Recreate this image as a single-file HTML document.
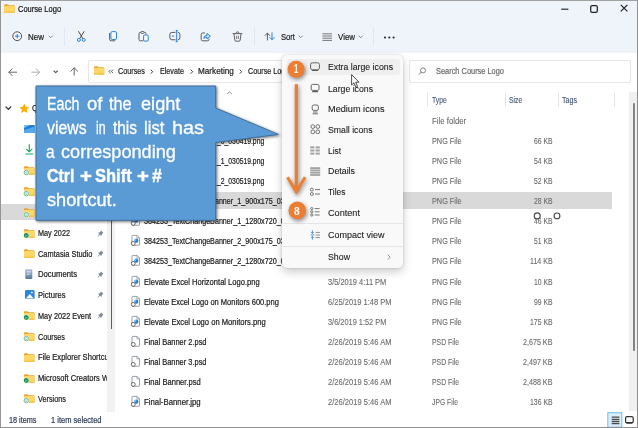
<!DOCTYPE html>
<html lang="en"><head><meta charset="utf-8"><title>Course Logo</title>
<style>
*{box-sizing:border-box;margin:0;padding:0}
html,body{width:638px;height:428px;overflow:hidden;background:#fff}
body{font-family:"Liberation Sans",sans-serif;position:relative;color:#1a1a1a}
.a{position:absolute}
.t{position:absolute;white-space:nowrap;line-height:1;transform-origin:0 50%;display:block}
#win{position:absolute;left:0;top:0;width:638px;height:428px;overflow:hidden}
svg{position:absolute;overflow:visible}
</style></head><body><div id="win">
<!-- base -->
<div class="a" style="left:0px;top:0px;width:638px;height:53.2px;background:#eff4fb"></div>
<svg style="left:4.1px;top:3.8px" width="10.9" height="8.8" viewBox="0 0 21 17.6"><path d="M0 2.2 Q0 0.6 1.6 0.6 H7 L9 2.6 H19.4 Q21 2.6 21 4.2 V16 Q21 17.6 19.4 17.6 H1.6 Q0 17.6 0 16 Z" fill="#e9a52d"/><path d="M0 5.4 Q0 4.2 1.4 4.2 H19.6 Q21 4.2 21 5.6 V16 Q21 17.6 19.4 17.6 H1.6 Q0 17.6 0 16 Z" fill="#ffd767"/><path d="M0 14.8 H21 V16 Q21 17.6 19.4 17.6 H1.6 Q0 17.6 0 16 Z" fill="#f4c144"/></svg>
<svg style="left:560px;top:3.5px" width="10" height="10" viewBox="0 0 10 10"><path d="M1.2 5.2 H8.4" stroke="#222" stroke-width="1.15"/></svg>
<svg style="left:588.5px;top:3.5px" width="10" height="10" viewBox="0 0 10 10"><rect x="1.7" y="1.7" width="6.6" height="6.6" rx="1.4" fill="none" stroke="#222" stroke-width="1.25"/></svg>
<svg style="left:618.6px;top:3.4px" width="10" height="10" viewBox="0 0 10 10"><path d="M1.8 1.8 L8.4 8.4 M8.4 1.8 L1.8 8.4" stroke="#222" stroke-width="1.2"/></svg>
<div class="a" style="left:63.7px;top:27px;width:1px;height:19px;background:#e3e7ee"></div>
<div class="a" style="left:253.5px;top:27px;width:1px;height:19px;background:#e3e7ee"></div>
<div class="a" style="left:372.8px;top:27px;width:1px;height:19px;background:#e3e7ee"></div>
<svg style="left:12.3px;top:30.9px" width="10.4" height="10.4" viewBox="0 0 10.4 10.4"><circle cx="5.2" cy="5.2" r="4.4" fill="#f7f9fc" stroke="#4a4a4a" stroke-width="1"/><path d="M5.2 3 V7.4 M3 5.2 H7.4" stroke="#2f7fd6" stroke-width="1"/></svg>
<svg style="left:47.8px;top:34.949999999999996px" width="5.4" height="3.7" viewBox="0 0 5.4 3.7"><path d="M1 1 L2.7 2.7 L4.4 1" stroke="#777" stroke-width="0.9" fill="none" stroke-linecap="round" stroke-linejoin="round"/></svg>
<svg style="left:298.3px;top:34.949999999999996px" width="5.4" height="3.7" viewBox="0 0 5.4 3.7"><path d="M1 1 L2.7 2.7 L4.4 1" stroke="#777" stroke-width="0.9" fill="none" stroke-linecap="round" stroke-linejoin="round"/></svg>
<svg style="left:357.6px;top:34.949999999999996px" width="5.4" height="3.7" viewBox="0 0 5.4 3.7"><path d="M1 1 L2.7 2.7 L4.4 1" stroke="#777" stroke-width="0.9" fill="none" stroke-linecap="round" stroke-linejoin="round"/></svg>
<svg style="left:76px;top:30.6px" width="10.5" height="11.2" viewBox="0 0 10.5 11.2"><path d="M2.6 0.6 L6.9 7.6 M8 0.6 L3.7 7.6" stroke="#4a4a4a" stroke-width="1" fill="none" stroke-linecap="round"/><circle cx="2.9" cy="8.9" r="1.5" fill="none" stroke="#2f7fd6" stroke-width="1"/><circle cx="7.7" cy="8.9" r="1.5" fill="none" stroke="#2f7fd6" stroke-width="1"/></svg>
<svg style="left:107.5px;top:31.2px" width="10" height="10.8" viewBox="0 0 10 10.8"><path d="M1.6 2.4 V8.2 Q1.6 9.8 3.2 9.8 H6.8" stroke="#5a5a5a" stroke-width="1" fill="none" stroke-linecap="round"/><rect x="2.9" y="0.6" width="5.6" height="7.9" rx="1.3" fill="#f7faff" stroke="#2f7fd6" stroke-width="1"/></svg>
<svg style="left:138px;top:31.2px" width="11" height="10.8" viewBox="0 0 11 10.8"><path d="M5.2 9.8 H2.4 Q1 9.8 1 8.4 V2.6 Q1 1.4 2.4 1.4 H6.6 Q8 1.4 8 2.6 V3.4" stroke="#5a5a5a" stroke-width="1" fill="none"/><rect x="2.9" y="0.5" width="3.2" height="1.9" rx="0.8" fill="#eff4fb" stroke="#5a5a5a" stroke-width="0.9"/><rect x="5.6" y="4" width="4.6" height="6.1" rx="1.1" fill="#f7faff" stroke="#2f7fd6" stroke-width="1"/></svg>
<svg style="left:168.5px;top:30.2px" width="12" height="12.4" viewBox="0 0 12 12.4"><rect x="0.9" y="2.4" width="10" height="7.4" rx="2" fill="none" stroke="#5a5a5a" stroke-width="1"/><rect x="6.5" y="1.6" width="2.4" height="9" fill="#eff4fb"/><path d="M7.7 0.5 V11.7 M6.7 0.5 H8.7 M6.7 11.7 H8.7" stroke="#2f7fd6" stroke-width="1" fill="none"/><path d="M2.8 6.1 H5" stroke="#2f7fd6" stroke-width="1"/></svg>
<svg style="left:200px;top:31.2px" width="11.5" height="10.8" viewBox="0 0 11.5 10.8"><path d="M4.6 2 H2.6 Q1.2 2 1.2 3.4 V8.4 Q1.2 9.8 2.6 9.8 H7.6 Q9 9.8 9 8.4 V8" stroke="#5a5a5a" stroke-width="1" fill="none" stroke-linecap="round"/><path d="M3.8 7.4 Q4 4.4 7 4.3 V2.4 L10.4 5.2 L7 8 V6.2 Q5 6.1 3.8 7.4 Z" fill="#d6e8fb" stroke="#2f7fd6" stroke-width="1" stroke-linejoin="round"/></svg>
<svg style="left:231.5px;top:31px" width="11" height="11" viewBox="0 0 11 11"><path d="M1 2.6 H10 M4 2.4 Q4 0.8 5.5 0.8 Q7 0.8 7 2.4" stroke="#5a5a5a" stroke-width="0.95" fill="none" stroke-linecap="round"/><path d="M2 2.8 L2.8 9 Q2.9 10.2 4 10.2 H7 Q8.1 10.2 8.2 9 L9 2.8" stroke="#5a5a5a" stroke-width="0.95" fill="none"/><path d="M4.6 4.8 V8 M6.4 4.8 V8" stroke="#5a5a5a" stroke-width="0.8"/></svg>
<svg style="left:264px;top:32.4px" width="11.5" height="9" viewBox="0 0 11.5 9"><path d="M3.4 8 V1.2 M1.2 3.4 L3.4 1.1 L5.6 3.4" stroke="#5a5a5a" stroke-width="1" fill="none" stroke-linecap="round" stroke-linejoin="round"/><path d="M8 0.8 V7.6 M5.8 5.4 L8 7.7 L10.2 5.4" stroke="#2f7fd6" stroke-width="1" fill="none" stroke-linecap="round" stroke-linejoin="round"/></svg>
<svg style="left:322px;top:33px" width="10.5" height="8.4" viewBox="0 0 10.5 8.4"><path d="M0.4 0.8 H10 M0.4 3 H10 M0.4 5.2 H10 M0.4 7.4 H10" stroke="#6a6a6a" stroke-width="0.9"/></svg>
<svg style="left:383px;top:35.5px" width="13" height="3" viewBox="0 0 13 3"><circle cx="2" cy="1.5" r="1.05" fill="#222"/><circle cx="6.3" cy="1.5" r="1.05" fill="#222"/><circle cx="10.6" cy="1.5" r="1.05" fill="#222"/></svg>
<svg style="left:8px;top:67.5px" width="9.5" height="8.5" viewBox="0 0 9.5 8.5"><path d="M8.6 4.2 H1 M4.2 0.8 L0.8 4.2 L4.2 7.6" stroke="#5f5f5f" stroke-width="0.95" fill="none" stroke-linecap="round" stroke-linejoin="round"/></svg>
<svg style="left:31.2px;top:67.5px" width="9.5" height="8.5" viewBox="0 0 9.5 8.5"><path d="M0.8 4.2 H8.4 M5.2 0.8 L8.6 4.2 L5.2 7.6" stroke="#a6a6a6" stroke-width="0.95" fill="none" stroke-linecap="round" stroke-linejoin="round"/></svg>
<svg style="left:52.5px;top:69.65px" width="5.4" height="3.7" viewBox="0 0 5.4 3.7"><path d="M1 1 L2.7 2.7 L4.4 1" stroke="#555" stroke-width="1.1" fill="none" stroke-linecap="round" stroke-linejoin="round"/></svg>
<svg style="left:70.2px;top:67.2px" width="8.5" height="9" viewBox="0 0 8.5 9"><path d="M4.2 8.2 V1 M0.8 4.2 L4.2 0.8 L7.6 4.2" stroke="#5f5f5f" stroke-width="0.95" fill="none" stroke-linecap="round" stroke-linejoin="round"/></svg>
<div class="a" style="left:88.3px;top:60.3px;width:312px;height:22.3px;border:1px solid #e6e6e6;border-radius:2px;background:#fff"></div>
<div class="a" style="left:409.3px;top:60.3px;width:221.3px;height:22.3px;border:1px solid #e6e6e6;border-radius:2px;background:#fff"></div>
<svg style="left:94px;top:66.3px" width="10.4" height="8.5" viewBox="0 0 21 17.6"><path d="M0 2.2 Q0 0.6 1.6 0.6 H7 L9 2.6 H19.4 Q21 2.6 21 4.2 V16 Q21 17.6 19.4 17.6 H1.6 Q0 17.6 0 16 Z" fill="#e9a52d"/><path d="M0 5.4 Q0 4.2 1.4 4.2 H19.6 Q21 4.2 21 5.6 V16 Q21 17.6 19.4 17.6 H1.6 Q0 17.6 0 16 Z" fill="#ffd767"/><path d="M0 14.8 H21 V16 Q21 17.6 19.4 17.6 H1.6 Q0 17.6 0 16 Z" fill="#f4c144"/></svg>
<svg style="left:107.5px;top:69px" width="6" height="5" viewBox="0 0 6 5"><path d="M2.6 0.8 L0.9 2.5 L2.6 4.2 M5 0.8 L3.3 2.5 L5 4.2" stroke="#444" stroke-width="0.9" fill="none"/></svg>
<svg style="left:150.25000000000003px;top:69.1px" width="3.7" height="5.4" viewBox="0 0 3.7 5.4"><path d="M1 1 L2.7 2.7 L1 4.4" stroke="#3a3a3a" stroke-width="1.0" fill="none" stroke-linecap="round" stroke-linejoin="round"/></svg>
<svg style="left:189.65px;top:69.1px" width="3.7" height="5.4" viewBox="0 0 3.7 5.4"><path d="M1 1 L2.7 2.7 L1 4.4" stroke="#3a3a3a" stroke-width="1.0" fill="none" stroke-linecap="round" stroke-linejoin="round"/></svg>
<svg style="left:239.45000000000002px;top:69.1px" width="3.7" height="5.4" viewBox="0 0 3.7 5.4"><path d="M1 1 L2.7 2.7 L1 4.4" stroke="#3a3a3a" stroke-width="1.0" fill="none" stroke-linecap="round" stroke-linejoin="round"/></svg>
<svg style="left:418.2px;top:67px" width="8.5" height="8.5" viewBox="0 0 8.5 8.5"><circle cx="5" cy="3.4" r="2.5" fill="none" stroke="#666" stroke-width="0.8"/><path d="M3.2 5.2 L0.9 7.5" stroke="#666" stroke-width="0.8" stroke-linecap="round"/></svg>
<div class="a" style="left:426.7px;top:92px;width:1px;height:15px;background:#e6e6e6"></div>
<div class="a" style="left:505.2px;top:92px;width:1px;height:15px;background:#e6e6e6"></div>
<div class="a" style="left:557.5px;top:92px;width:1px;height:15px;background:#e6e6e6"></div>
<div class="a" style="left:614.1px;top:92px;width:1px;height:15px;background:#e6e6e6"></div>
<svg style="left:226.3px;top:91px" width="7" height="4" viewBox="0 0 7 4"><path d="M1 3 L3.4 0.8 L5.8 3" stroke="#777" stroke-width="0.8" fill="none"/></svg>
<div class="a" style="left:117px;top:192.3px;width:495px;height:17px;background:#d9d9d9"></div>
<svg style="left:130.5px;top:115.9px" width="10.5" height="8.8" viewBox="0 0 21 17.6"><path d="M0 2.2 Q0 0.6 1.6 0.6 H7 L9 2.6 H19.4 Q21 2.6 21 4.2 V16 Q21 17.6 19.4 17.6 H1.6 Q0 17.6 0 16 Z" fill="#e9a52d"/><path d="M0 5.4 Q0 4.2 1.4 4.2 H19.6 Q21 4.2 21 5.6 V16 Q21 17.6 19.4 17.6 H1.6 Q0 17.6 0 16 Z" fill="#ffd767"/><path d="M0 14.8 H21 V16 Q21 17.6 19.4 17.6 H1.6 Q0 17.6 0 16 Z" fill="#f4c144"/></svg>
<svg style="left:131.2px;top:134.9px" width="9.5" height="10.7" viewBox="0 0 18 20.4"><path d="M3 0.8 H11.5 L16.2 5.5 V18.5 Q16.2 19.6 15 19.6 H3 Q1.8 19.6 1.8 18.5 V2 Q1.8 0.8 3 0.8 Z" fill="#fff" stroke="#6b7683" stroke-width="1.3"/><path d="M11.3 1 V5.6 H16" fill="none" stroke="#6b7683" stroke-width="1.1"/><circle cx="10.2" cy="10.8" r="3.9" fill="#1f7fe0"/><circle cx="8.8" cy="9.4" r="1.5" fill="#9dd0fa"/><circle cx="4.2" cy="16" r="3.7" fill="#fff" stroke="#454545" stroke-width="1.5"/></svg>
<svg style="left:131.2px;top:155.1px" width="9.5" height="10.7" viewBox="0 0 18 20.4"><path d="M3 0.8 H11.5 L16.2 5.5 V18.5 Q16.2 19.6 15 19.6 H3 Q1.8 19.6 1.8 18.5 V2 Q1.8 0.8 3 0.8 Z" fill="#fff" stroke="#6b7683" stroke-width="1.3"/><path d="M11.3 1 V5.6 H16" fill="none" stroke="#6b7683" stroke-width="1.1"/><circle cx="10.2" cy="10.8" r="3.9" fill="#1f7fe0"/><circle cx="8.8" cy="9.4" r="1.5" fill="#9dd0fa"/><circle cx="4.2" cy="16" r="3.7" fill="#fff" stroke="#454545" stroke-width="1.5"/></svg>
<svg style="left:131.2px;top:175.20000000000002px" width="9.5" height="10.7" viewBox="0 0 18 20.4"><path d="M3 0.8 H11.5 L16.2 5.5 V18.5 Q16.2 19.6 15 19.6 H3 Q1.8 19.6 1.8 18.5 V2 Q1.8 0.8 3 0.8 Z" fill="#fff" stroke="#6b7683" stroke-width="1.3"/><path d="M11.3 1 V5.6 H16" fill="none" stroke="#6b7683" stroke-width="1.1"/><circle cx="10.2" cy="10.8" r="3.9" fill="#1f7fe0"/><circle cx="8.8" cy="9.4" r="1.5" fill="#9dd0fa"/><circle cx="4.2" cy="16" r="3.7" fill="#fff" stroke="#454545" stroke-width="1.5"/></svg>
<svg style="left:131.2px;top:195.4px" width="9.5" height="10.7" viewBox="0 0 18 20.4"><path d="M3 0.8 H11.5 L16.2 5.5 V18.5 Q16.2 19.6 15 19.6 H3 Q1.8 19.6 1.8 18.5 V2 Q1.8 0.8 3 0.8 Z" fill="#fff" stroke="#6b7683" stroke-width="1.3"/><path d="M11.3 1 V5.6 H16" fill="none" stroke="#6b7683" stroke-width="1.1"/><circle cx="10.2" cy="10.8" r="3.9" fill="#1f7fe0"/><circle cx="8.8" cy="9.4" r="1.5" fill="#9dd0fa"/><circle cx="4.2" cy="16" r="3.7" fill="#fff" stroke="#454545" stroke-width="1.5"/></svg>
<svg style="left:131.2px;top:215.4px" width="9.5" height="10.7" viewBox="0 0 18 20.4"><path d="M3 0.8 H11.5 L16.2 5.5 V18.5 Q16.2 19.6 15 19.6 H3 Q1.8 19.6 1.8 18.5 V2 Q1.8 0.8 3 0.8 Z" fill="#fff" stroke="#6b7683" stroke-width="1.3"/><path d="M11.3 1 V5.6 H16" fill="none" stroke="#6b7683" stroke-width="1.1"/><circle cx="10.2" cy="10.8" r="3.9" fill="#1f7fe0"/><circle cx="8.8" cy="9.4" r="1.5" fill="#9dd0fa"/><circle cx="4.2" cy="16" r="3.7" fill="#fff" stroke="#454545" stroke-width="1.5"/></svg>
<svg style="left:131.2px;top:235.4px" width="9.5" height="10.7" viewBox="0 0 18 20.4"><path d="M3 0.8 H11.5 L16.2 5.5 V18.5 Q16.2 19.6 15 19.6 H3 Q1.8 19.6 1.8 18.5 V2 Q1.8 0.8 3 0.8 Z" fill="#fff" stroke="#6b7683" stroke-width="1.3"/><path d="M11.3 1 V5.6 H16" fill="none" stroke="#6b7683" stroke-width="1.1"/><circle cx="10.2" cy="10.8" r="3.9" fill="#1f7fe0"/><circle cx="8.8" cy="9.4" r="1.5" fill="#9dd0fa"/><circle cx="4.2" cy="16" r="3.7" fill="#fff" stroke="#454545" stroke-width="1.5"/></svg>
<svg style="left:131.2px;top:255.4px" width="9.5" height="10.7" viewBox="0 0 18 20.4"><path d="M3 0.8 H11.5 L16.2 5.5 V18.5 Q16.2 19.6 15 19.6 H3 Q1.8 19.6 1.8 18.5 V2 Q1.8 0.8 3 0.8 Z" fill="#fff" stroke="#6b7683" stroke-width="1.3"/><path d="M11.3 1 V5.6 H16" fill="none" stroke="#6b7683" stroke-width="1.1"/><circle cx="10.2" cy="10.8" r="3.9" fill="#1f7fe0"/><circle cx="8.8" cy="9.4" r="1.5" fill="#9dd0fa"/><circle cx="4.2" cy="16" r="3.7" fill="#fff" stroke="#454545" stroke-width="1.5"/></svg>
<svg style="left:131.2px;top:275.9px" width="9.5" height="10.7" viewBox="0 0 18 20.4"><path d="M3 0.8 H11.5 L16.2 5.5 V18.5 Q16.2 19.6 15 19.6 H3 Q1.8 19.6 1.8 18.5 V2 Q1.8 0.8 3 0.8 Z" fill="#fff" stroke="#6b7683" stroke-width="1.3"/><path d="M11.3 1 V5.6 H16" fill="none" stroke="#6b7683" stroke-width="1.1"/><circle cx="10.2" cy="10.8" r="3.9" fill="#1f7fe0"/><circle cx="8.8" cy="9.4" r="1.5" fill="#9dd0fa"/><circle cx="4.2" cy="16" r="3.7" fill="#fff" stroke="#454545" stroke-width="1.5"/></svg>
<svg style="left:131.2px;top:295.9px" width="9.5" height="10.7" viewBox="0 0 18 20.4"><path d="M3 0.8 H11.5 L16.2 5.5 V18.5 Q16.2 19.6 15 19.6 H3 Q1.8 19.6 1.8 18.5 V2 Q1.8 0.8 3 0.8 Z" fill="#fff" stroke="#6b7683" stroke-width="1.3"/><path d="M11.3 1 V5.6 H16" fill="none" stroke="#6b7683" stroke-width="1.1"/><circle cx="10.2" cy="10.8" r="3.9" fill="#1f7fe0"/><circle cx="8.8" cy="9.4" r="1.5" fill="#9dd0fa"/><circle cx="4.2" cy="16" r="3.7" fill="#fff" stroke="#454545" stroke-width="1.5"/></svg>
<svg style="left:131.2px;top:316.4px" width="9.5" height="10.7" viewBox="0 0 18 20.4"><path d="M3 0.8 H11.5 L16.2 5.5 V18.5 Q16.2 19.6 15 19.6 H3 Q1.8 19.6 1.8 18.5 V2 Q1.8 0.8 3 0.8 Z" fill="#fff" stroke="#6b7683" stroke-width="1.3"/><path d="M11.3 1 V5.6 H16" fill="none" stroke="#6b7683" stroke-width="1.1"/><circle cx="10.2" cy="10.8" r="3.9" fill="#1f7fe0"/><circle cx="8.8" cy="9.4" r="1.5" fill="#9dd0fa"/><circle cx="4.2" cy="16" r="3.7" fill="#fff" stroke="#454545" stroke-width="1.5"/></svg>
<svg style="left:131.2px;top:336.2px" width="9.5" height="10.7" viewBox="0 0 18 20.4"><path d="M3 0.8 H11.5 L16.2 5.5 V18.5 Q16.2 19.6 15 19.6 H3 Q1.8 19.6 1.8 18.5 V2 Q1.8 0.8 3 0.8 Z" fill="#fff" stroke="#6b7683" stroke-width="1.3"/><path d="M11.3 1 V5.6 H16" fill="none" stroke="#6b7683" stroke-width="1.1"/><circle cx="4.2" cy="16" r="3.7" fill="#fff" stroke="#454545" stroke-width="1.5"/></svg>
<svg style="left:131.2px;top:355.9px" width="9.5" height="10.7" viewBox="0 0 18 20.4"><path d="M3 0.8 H11.5 L16.2 5.5 V18.5 Q16.2 19.6 15 19.6 H3 Q1.8 19.6 1.8 18.5 V2 Q1.8 0.8 3 0.8 Z" fill="#fff" stroke="#6b7683" stroke-width="1.3"/><path d="M11.3 1 V5.6 H16" fill="none" stroke="#6b7683" stroke-width="1.1"/><circle cx="4.2" cy="16" r="3.7" fill="#fff" stroke="#454545" stroke-width="1.5"/></svg>
<svg style="left:131.2px;top:376.2px" width="9.5" height="10.7" viewBox="0 0 18 20.4"><path d="M3 0.8 H11.5 L16.2 5.5 V18.5 Q16.2 19.6 15 19.6 H3 Q1.8 19.6 1.8 18.5 V2 Q1.8 0.8 3 0.8 Z" fill="#fff" stroke="#6b7683" stroke-width="1.3"/><path d="M11.3 1 V5.6 H16" fill="none" stroke="#6b7683" stroke-width="1.1"/><circle cx="4.2" cy="16" r="3.7" fill="#fff" stroke="#454545" stroke-width="1.5"/></svg>
<svg style="left:131.2px;top:396.4px" width="9.5" height="10.7" viewBox="0 0 18 20.4"><path d="M3 0.8 H11.5 L16.2 5.5 V18.5 Q16.2 19.6 15 19.6 H3 Q1.8 19.6 1.8 18.5 V2 Q1.8 0.8 3 0.8 Z" fill="#fff" stroke="#6b7683" stroke-width="1.3"/><path d="M11.3 1 V5.6 H16" fill="none" stroke="#6b7683" stroke-width="1.1"/><circle cx="10.2" cy="10.8" r="3.9" fill="#1f7fe0"/><circle cx="8.8" cy="9.4" r="1.5" fill="#9dd0fa"/><circle cx="4.2" cy="16" r="3.7" fill="#fff" stroke="#454545" stroke-width="1.5"/></svg>
<div class="a" style="left:628.6px;top:92px;width:8px;height:319.3px;background:#f0f0f0"></div>
<div class="a" style="left:633px;top:103.3px;width:1.5px;height:248px;background:#858585;border-radius:1px"></div>
<div class="a" style="left:591.8px;top:345.5px;width:0px;height:0px;"></div>
<svg style="left:607px;top:412px" width="30" height="15" viewBox="0 0 30 15"><rect x="0.8" y="0.7" width="14" height="14.5" fill="#dcedfa" stroke="#7cc3ee" stroke-width="1.1"/><path d="M4.7 5.2 H12.4 M4.7 7.3 H12.4 M4.7 9.4 H12.4 M4.7 11.5 H12.4" stroke="#4a4a4a" stroke-width="1.3"/><rect x="18.6" y="4.7" width="7.6" height="6" rx="1.3" fill="#fff" stroke="#333" stroke-width="1.2"/><path d="M19.4 11 H25.4" stroke="#333" stroke-width="1.4"/></svg>
<svg style="left:532px;top:210px" width="30" height="10" viewBox="0 0 30 10"><circle cx="5.2" cy="5.9" r="3" fill="#fff" stroke="#444" stroke-width="1.1"/><circle cx="25" cy="5.9" r="2.9" fill="#fff" stroke="#444" stroke-width="1.1"/></svg>
<div class="a" style="left:0px;top:0px;width:638px;height:428px;border:1px solid #a2a2a2;border-left:1.4px solid #959595;border-right:1.2px solid #8c8c8c;border-bottom:1.8px solid #8f8f8f"></div>
<span class="t" style="left:17.60px;top:4.30px;font-size:9.4px;color:#111;-webkit-text-stroke:0.2px #111;transform:scaleX(0.8028);">Course Logo</span>
<span class="t" style="left:27.90px;top:34.00px;font-size:8.2px;color:#222;-webkit-text-stroke:0.2px #222;transform:scaleX(0.9701);">New</span>
<span class="t" style="left:280.50px;top:34.00px;font-size:8.2px;color:#222;-webkit-text-stroke:0.2px #222;transform:scaleX(0.9314);">Sort</span>
<span class="t" style="left:337.50px;top:34.00px;font-size:8.2px;color:#222;-webkit-text-stroke:0.2px #222;transform:scaleX(0.9654);">View</span>
<span class="t" style="left:117.80px;top:68.30px;font-size:8.2px;color:#222;-webkit-text-stroke:0.2px #222;transform:scaleX(0.8852);">Courses</span>
<span class="t" style="left:160.40px;top:68.30px;font-size:8.2px;color:#222;-webkit-text-stroke:0.2px #222;transform:scaleX(0.8751);">Elevate</span>
<span class="t" style="left:197.90px;top:68.30px;font-size:8.2px;color:#222;-webkit-text-stroke:0.2px #222;transform:scaleX(0.9985);">Marketing</span>
<span class="t" style="left:248.20px;top:68.30px;font-size:8.2px;color:#222;-webkit-text-stroke:0.2px #222;transform:scaleX(0.8808);">Course Logo</span>
<span class="t" style="left:435.50px;top:67.90px;font-size:8.2px;color:#6a6a6a;-webkit-text-stroke:0.2px #6a6a6a;transform:scaleX(0.9053);">Search Course Logo</span>
<span class="t" style="left:431.80px;top:97.30px;font-size:8.2px;color:#44567a;-webkit-text-stroke:0.12px #44567a;transform:scaleX(0.8282);">Type</span>
<span class="t" style="left:509.30px;top:97.30px;font-size:8.2px;color:#44567a;-webkit-text-stroke:0.12px #44567a;transform:scaleX(0.8282);">Size</span>
<span class="t" style="left:561.80px;top:97.30px;font-size:8.2px;color:#44567a;-webkit-text-stroke:0.12px #44567a;transform:scaleX(0.8788);">Tags</span>
<span class="t" style="left:431.80px;top:117.50px;font-size:8.2px;color:#6a6a6a;-webkit-text-stroke:0.1px #6a6a6a;transform:scaleX(0.9512);">File folder</span>
<span class="t" style="left:217.00px;top:137.50px;font-size:8.2px;color:#1a1a1a;-webkit-text-stroke:0.2px #1a1a1a;transform:scaleX(0.8292);">_0_030419.png</span>
<span class="t" style="left:431.80px;top:137.50px;font-size:8.2px;color:#6a6a6a;-webkit-text-stroke:0.1px #6a6a6a;transform:scaleX(0.8911);">PNG File</span>
<span class="t" style="left:533.60px;top:137.50px;font-size:8.2px;color:#6a6a6a;-webkit-text-stroke:0.1px #6a6a6a;transform:scaleX(0.8336);">66 KB</span>
<span class="t" style="left:217.00px;top:157.70px;font-size:8.2px;color:#1a1a1a;-webkit-text-stroke:0.2px #1a1a1a;transform:scaleX(0.8292);">_1_030519.png</span>
<span class="t" style="left:431.80px;top:157.70px;font-size:8.2px;color:#6a6a6a;-webkit-text-stroke:0.1px #6a6a6a;transform:scaleX(0.8911);">PNG File</span>
<span class="t" style="left:533.60px;top:157.70px;font-size:8.2px;color:#6a6a6a;-webkit-text-stroke:0.1px #6a6a6a;transform:scaleX(0.8336);">54 KB</span>
<span class="t" style="left:217.00px;top:177.80px;font-size:8.2px;color:#1a1a1a;-webkit-text-stroke:0.2px #1a1a1a;transform:scaleX(0.8292);">_2_030519.png</span>
<span class="t" style="left:431.80px;top:177.80px;font-size:8.2px;color:#6a6a6a;-webkit-text-stroke:0.1px #6a6a6a;transform:scaleX(0.8911);">PNG File</span>
<span class="t" style="left:533.60px;top:177.80px;font-size:8.2px;color:#6a6a6a;-webkit-text-stroke:0.1px #6a6a6a;transform:scaleX(0.8336);">52 KB</span>
<span class="t" style="left:143.80px;top:198.00px;font-size:8.2px;color:#1a1a1a;-webkit-text-stroke:0.2px #1a1a1a;transform:scaleX(0.8750);">384253_TextChangeBanner_1_900x175_030519.png</span>
<span class="t" style="left:431.80px;top:198.00px;font-size:8.2px;color:#6a6a6a;-webkit-text-stroke:0.1px #6a6a6a;transform:scaleX(0.8911);">PNG File</span>
<span class="t" style="left:533.60px;top:198.00px;font-size:8.2px;color:#6a6a6a;-webkit-text-stroke:0.1px #6a6a6a;transform:scaleX(0.8336);">28 KB</span>
<span class="t" style="left:143.80px;top:218.00px;font-size:8.2px;color:#1a1a1a;-webkit-text-stroke:0.2px #1a1a1a;transform:scaleX(0.8750);">384253_TextChangeBanner_1_1280x720_030519.png</span>
<span class="t" style="left:431.80px;top:218.00px;font-size:8.2px;color:#6a6a6a;-webkit-text-stroke:0.1px #6a6a6a;transform:scaleX(0.8911);">PNG File</span>
<span class="t" style="left:533.60px;top:218.00px;font-size:8.2px;color:#6a6a6a;-webkit-text-stroke:0.1px #6a6a6a;transform:scaleX(0.8336);">46 KB</span>
<span class="t" style="left:143.80px;top:238.00px;font-size:8.2px;color:#1a1a1a;-webkit-text-stroke:0.2px #1a1a1a;transform:scaleX(0.8750);">384253_TextChangeBanner_2_900x175_030519.png</span>
<span class="t" style="left:431.80px;top:238.00px;font-size:8.2px;color:#6a6a6a;-webkit-text-stroke:0.1px #6a6a6a;transform:scaleX(0.8911);">PNG File</span>
<span class="t" style="left:533.60px;top:238.00px;font-size:8.2px;color:#6a6a6a;-webkit-text-stroke:0.1px #6a6a6a;transform:scaleX(0.8336);">51 KB</span>
<span class="t" style="left:143.80px;top:258.00px;font-size:8.2px;color:#1a1a1a;-webkit-text-stroke:0.2px #1a1a1a;transform:scaleX(0.8750);">384253_TextChangeBanner_2_1280x720_030519.png</span>
<span class="t" style="left:431.80px;top:258.00px;font-size:8.2px;color:#6a6a6a;-webkit-text-stroke:0.1px #6a6a6a;transform:scaleX(0.8911);">PNG File</span>
<span class="t" style="left:529.60px;top:258.00px;font-size:8.2px;color:#6a6a6a;-webkit-text-stroke:0.1px #6a6a6a;transform:scaleX(0.8610);">114 KB</span>
<span class="t" style="left:143.80px;top:278.50px;font-size:8.2px;color:#1a1a1a;-webkit-text-stroke:0.2px #1a1a1a;transform:scaleX(0.9243);">Elevate Excel Horizontal Logo.png</span>
<span class="t" style="left:431.80px;top:278.50px;font-size:8.2px;color:#6a6a6a;-webkit-text-stroke:0.1px #6a6a6a;transform:scaleX(0.8911);">PNG File</span>
<span class="t" style="left:533.60px;top:278.50px;font-size:8.2px;color:#6a6a6a;-webkit-text-stroke:0.1px #6a6a6a;transform:scaleX(0.8336);">10 KB</span>
<span class="t" style="left:328.00px;top:278.50px;font-size:8.2px;color:#6a6a6a;-webkit-text-stroke:0.1px #6a6a6a;transform:scaleX(0.9105);">3/5/2019 4:11 PM</span>
<span class="t" style="left:143.80px;top:298.50px;font-size:8.2px;color:#1a1a1a;-webkit-text-stroke:0.2px #1a1a1a;transform:scaleX(0.9176);">Elevate Excel Logo on Monitors 600.png</span>
<span class="t" style="left:431.80px;top:298.50px;font-size:8.2px;color:#6a6a6a;-webkit-text-stroke:0.1px #6a6a6a;transform:scaleX(0.8911);">PNG File</span>
<span class="t" style="left:533.60px;top:298.50px;font-size:8.2px;color:#6a6a6a;-webkit-text-stroke:0.1px #6a6a6a;transform:scaleX(0.8336);">99 KB</span>
<span class="t" style="left:328.00px;top:298.50px;font-size:8.2px;color:#6a6a6a;-webkit-text-stroke:0.1px #6a6a6a;transform:scaleX(0.9176);">6/25/2019 1:48 PM</span>
<span class="t" style="left:143.80px;top:319.00px;font-size:8.2px;color:#1a1a1a;-webkit-text-stroke:0.2px #1a1a1a;transform:scaleX(0.9283);">Elevate Excel Logo on Monitors.png</span>
<span class="t" style="left:431.80px;top:319.00px;font-size:8.2px;color:#6a6a6a;-webkit-text-stroke:0.1px #6a6a6a;transform:scaleX(0.8911);">PNG File</span>
<span class="t" style="left:529.60px;top:319.00px;font-size:8.2px;color:#6a6a6a;-webkit-text-stroke:0.1px #6a6a6a;transform:scaleX(0.8414);">175 KB</span>
<span class="t" style="left:328.00px;top:319.00px;font-size:8.2px;color:#6a6a6a;-webkit-text-stroke:0.1px #6a6a6a;transform:scaleX(0.9019);">3/6/2019 1:52 PM</span>
<span class="t" style="left:143.80px;top:338.80px;font-size:8.2px;color:#1a1a1a;-webkit-text-stroke:0.2px #1a1a1a;transform:scaleX(0.9093);">Final Banner 2.psd</span>
<span class="t" style="left:431.80px;top:338.80px;font-size:8.2px;color:#6a6a6a;-webkit-text-stroke:0.1px #6a6a6a;transform:scaleX(0.8418);">PSD File</span>
<span class="t" style="left:522.80px;top:338.80px;font-size:8.2px;color:#6a6a6a;-webkit-text-stroke:0.1px #6a6a6a;transform:scaleX(0.8727);">2,675 KB</span>
<span class="t" style="left:328.00px;top:338.80px;font-size:8.2px;color:#6a6a6a;-webkit-text-stroke:0.1px #6a6a6a;transform:scaleX(0.9236);">2/26/2019 5:46 AM</span>
<span class="t" style="left:143.80px;top:358.50px;font-size:8.2px;color:#1a1a1a;-webkit-text-stroke:0.2px #1a1a1a;transform:scaleX(0.9093);">Final Banner 3.psd</span>
<span class="t" style="left:431.80px;top:358.50px;font-size:8.2px;color:#6a6a6a;-webkit-text-stroke:0.1px #6a6a6a;transform:scaleX(0.8418);">PSD File</span>
<span class="t" style="left:522.80px;top:358.50px;font-size:8.2px;color:#6a6a6a;-webkit-text-stroke:0.1px #6a6a6a;transform:scaleX(0.8727);">2,497 KB</span>
<span class="t" style="left:328.00px;top:358.50px;font-size:8.2px;color:#6a6a6a;-webkit-text-stroke:0.1px #6a6a6a;transform:scaleX(0.9236);">2/26/2019 5:46 AM</span>
<span class="t" style="left:143.80px;top:378.80px;font-size:8.2px;color:#1a1a1a;-webkit-text-stroke:0.2px #1a1a1a;transform:scaleX(0.9227);">Final Banner.psd</span>
<span class="t" style="left:431.80px;top:378.80px;font-size:8.2px;color:#6a6a6a;-webkit-text-stroke:0.1px #6a6a6a;transform:scaleX(0.8418);">PSD File</span>
<span class="t" style="left:522.80px;top:378.80px;font-size:8.2px;color:#6a6a6a;-webkit-text-stroke:0.1px #6a6a6a;transform:scaleX(0.8727);">2,488 KB</span>
<span class="t" style="left:328.00px;top:378.80px;font-size:8.2px;color:#6a6a6a;-webkit-text-stroke:0.1px #6a6a6a;transform:scaleX(0.9236);">2/26/2019 5:46 AM</span>
<span class="t" style="left:143.80px;top:399.00px;font-size:8.2px;color:#1a1a1a;-webkit-text-stroke:0.2px #1a1a1a;transform:scaleX(0.9509);">Final-Banner.jpg</span>
<span class="t" style="left:431.80px;top:399.00px;font-size:8.2px;color:#6a6a6a;-webkit-text-stroke:0.1px #6a6a6a;transform:scaleX(0.8247);">JPG File</span>
<span class="t" style="left:529.60px;top:399.00px;font-size:8.2px;color:#6a6a6a;-webkit-text-stroke:0.1px #6a6a6a;transform:scaleX(0.8414);">136 KB</span>
<span class="t" style="left:328.00px;top:399.00px;font-size:8.2px;color:#6a6a6a;-webkit-text-stroke:0.1px #6a6a6a;transform:scaleX(0.9236);">2/26/2019 5:46 AM</span>
<span class="t" style="left:9.00px;top:416.80px;font-size:8.2px;color:#2b3a55;-webkit-text-stroke:0.2px #2b3a55;transform:scaleX(0.8884);">18 items</span>
<span class="t" style="left:50.80px;top:416.80px;font-size:8.2px;color:#2b3a55;-webkit-text-stroke:0.2px #2b3a55;transform:scaleX(0.9169);">1 item selected</span>
<!-- nav -->
<div class="a" style="left:1px;top:203.8px;width:108px;height:16.6px;background:#d9d9d9"></div>
<svg style="left:5.4px;top:106.2px" width="6.8" height="4.4" viewBox="0 0 6.8 4.4"><path d="M1 1 L3.4 3.4 L5.8 1" stroke="#333" stroke-width="1.2" fill="none" stroke-linecap="round" stroke-linejoin="round"/></svg>
<svg style="left:18.6px;top:102.8px" width="10.6" height="10.4" viewBox="0 0 10.6 10.4"><path d="M5.3 0.6 L6.8 3.8 L10.2 4.2 L7.7 6.6 L8.4 10 L5.3 8.3 L2.2 10 L2.9 6.6 L0.4 4.2 L3.8 3.8 Z" fill="#f6b100"/></svg>
<svg style="left:23.6px;top:125.2px" width="10.8" height="8" viewBox="0 0 10.8 8"><rect x="0" y="0" width="10.8" height="8" rx="1" fill="#1f7fd4"/><path d="M0 5 L10.8 1.5 V7 Q10.8 8 9.8 8 H1 Q0 8 0 7 Z" fill="#55a8ea"/><path d="M0 1 Q0 0 1 0 H6 L0 3 Z" fill="#7fc0f3"/></svg>
<svg style="left:24.6px;top:144.4px" width="8.6" height="11" viewBox="0 0 8.6 11"><path d="M4.3 0.6 V7.6 M1.6 5.2 L4.3 7.8 L7 5.2" stroke="#1ba868" stroke-width="1.1" fill="none" stroke-linecap="round" stroke-linejoin="round"/><path d="M0.8 10 H7.8" stroke="#1ba868" stroke-width="1.1" stroke-linecap="round"/></svg>
<svg style="left:23.8px;top:166.4px" width="10.5" height="8.8" viewBox="0 0 21 17.6"><path d="M0 2.2 Q0 0.6 1.6 0.6 H7 L9 2.6 H19.4 Q21 2.6 21 4.2 V16 Q21 17.6 19.4 17.6 H1.6 Q0 17.6 0 16 Z" fill="#e9a52d"/><path d="M0 5.4 Q0 4.2 1.4 4.2 H19.6 Q21 4.2 21 5.6 V16 Q21 17.6 19.4 17.6 H1.6 Q0 17.6 0 16 Z" fill="#ffd767"/><path d="M0 14.8 H21 V16 Q21 17.6 19.4 17.6 H1.6 Q0 17.6 0 16 Z" fill="#f4c144"/><circle cx="4.6" cy="13.2" r="5.8" fill="#fff"/><circle cx="4.6" cy="13.2" r="4.5" fill="#e9f6ee" stroke="#4aa777" stroke-width="1.5"/><path d="M3 13.6 A1.7 1.7 0 0 1 6.2 12.6 M6.2 14 A1.7 1.7 0 0 1 3.2 14.4" stroke="#4aa777" stroke-width="0.9" fill="none"/></svg>
<svg style="left:23.8px;top:187.2px" width="10.5" height="8.8" viewBox="0 0 21 17.6"><path d="M0 2.2 Q0 0.6 1.6 0.6 H7 L9 2.6 H19.4 Q21 2.6 21 4.2 V16 Q21 17.6 19.4 17.6 H1.6 Q0 17.6 0 16 Z" fill="#e9a52d"/><path d="M0 5.4 Q0 4.2 1.4 4.2 H19.6 Q21 4.2 21 5.6 V16 Q21 17.6 19.4 17.6 H1.6 Q0 17.6 0 16 Z" fill="#ffd767"/><path d="M0 14.8 H21 V16 Q21 17.6 19.4 17.6 H1.6 Q0 17.6 0 16 Z" fill="#f4c144"/><circle cx="4.6" cy="13.2" r="5.8" fill="#fff"/><circle cx="4.6" cy="13.2" r="4.5" fill="#e9f6ee" stroke="#4aa777" stroke-width="1.5"/><path d="M3 13.6 A1.7 1.7 0 0 1 6.2 12.6 M6.2 14 A1.7 1.7 0 0 1 3.2 14.4" stroke="#4aa777" stroke-width="0.9" fill="none"/></svg>
<svg style="left:23.8px;top:207.6px" width="10.5" height="8.8" viewBox="0 0 21 17.6"><path d="M0 2.2 Q0 0.6 1.6 0.6 H7 L9 2.6 H19.4 Q21 2.6 21 4.2 V16 Q21 17.6 19.4 17.6 H1.6 Q0 17.6 0 16 Z" fill="#e9a52d"/><path d="M0 5.4 Q0 4.2 1.4 4.2 H19.6 Q21 4.2 21 5.6 V16 Q21 17.6 19.4 17.6 H1.6 Q0 17.6 0 16 Z" fill="#ffd767"/><path d="M0 14.8 H21 V16 Q21 17.6 19.4 17.6 H1.6 Q0 17.6 0 16 Z" fill="#f4c144"/><circle cx="4.6" cy="13.2" r="5.8" fill="#fff"/><circle cx="4.6" cy="13.2" r="4.5" fill="#e9f6ee" stroke="#4aa777" stroke-width="1.5"/><path d="M3 13.6 A1.7 1.7 0 0 1 6.2 12.6 M6.2 14 A1.7 1.7 0 0 1 3.2 14.4" stroke="#4aa777" stroke-width="0.9" fill="none"/></svg>
<svg style="left:23.9px;top:228.7px" width="10.5" height="8.8" viewBox="0 0 21 17.6"><path d="M0 2.2 Q0 0.6 1.6 0.6 H7 L9 2.6 H19.4 Q21 2.6 21 4.2 V16 Q21 17.6 19.4 17.6 H1.6 Q0 17.6 0 16 Z" fill="#e9a52d"/><path d="M0 5.4 Q0 4.2 1.4 4.2 H19.6 Q21 4.2 21 5.6 V16 Q21 17.6 19.4 17.6 H1.6 Q0 17.6 0 16 Z" fill="#ffd767"/><path d="M0 14.8 H21 V16 Q21 17.6 19.4 17.6 H1.6 Q0 17.6 0 16 Z" fill="#f4c144"/><circle cx="4.6" cy="13.2" r="5.8" fill="#fff"/><circle cx="4.6" cy="13.2" r="5" fill="#1b8f4d"/><path d="M2.4 13.3 L4 14.9 L6.9 11.7" stroke="#fff" stroke-width="1.2" fill="none"/></svg>
<svg style="left:23.9px;top:249.2px" width="10.5" height="8.8" viewBox="0 0 21 17.6"><path d="M0 2.2 Q0 0.6 1.6 0.6 H7 L9 2.6 H19.4 Q21 2.6 21 4.2 V16 Q21 17.6 19.4 17.6 H1.6 Q0 17.6 0 16 Z" fill="#e9a52d"/><path d="M0 5.4 Q0 4.2 1.4 4.2 H19.6 Q21 4.2 21 5.6 V16 Q21 17.6 19.4 17.6 H1.6 Q0 17.6 0 16 Z" fill="#ffd767"/><path d="M0 14.8 H21 V16 Q21 17.6 19.4 17.6 H1.6 Q0 17.6 0 16 Z" fill="#f4c144"/></svg>
<svg style="left:25.4px;top:269px" width="7.6" height="10.2" viewBox="0 0 7.6 10.2"><defs><linearGradient id="dg" x1="0" y1="0" x2="0" y2="1"><stop offset="0" stop-color="#aebfd6"/><stop offset="1" stop-color="#56779f"/></linearGradient></defs><rect x="0.3" y="0.3" width="7" height="9.6" rx="1" fill="url(#dg)"/><path d="M1.8 2.4 H5.8 M1.8 4 H5.8 M1.8 5.6 H4.4" stroke="#eaf0f8" stroke-width="0.7"/></svg>
<svg style="left:24.6px;top:290.2px" width="9.6" height="9" viewBox="0 0 9.6 9"><rect x="0" y="0" width="9.6" height="9" rx="1.2" fill="#2a86d8"/><path d="M0.8 8.4 L4.8 4 L8.8 8.4 Z" fill="#fff"/><circle cx="6.9" cy="2.5" r="0.9" fill="#fff"/></svg>
<svg style="left:23.9px;top:311.2px" width="10.5" height="8.8" viewBox="0 0 21 17.6"><path d="M0 2.2 Q0 0.6 1.6 0.6 H7 L9 2.6 H19.4 Q21 2.6 21 4.2 V16 Q21 17.6 19.4 17.6 H1.6 Q0 17.6 0 16 Z" fill="#e9a52d"/><path d="M0 5.4 Q0 4.2 1.4 4.2 H19.6 Q21 4.2 21 5.6 V16 Q21 17.6 19.4 17.6 H1.6 Q0 17.6 0 16 Z" fill="#ffd767"/><path d="M0 14.8 H21 V16 Q21 17.6 19.4 17.6 H1.6 Q0 17.6 0 16 Z" fill="#f4c144"/><circle cx="4.6" cy="13.2" r="5.8" fill="#fff"/><circle cx="4.6" cy="13.2" r="5" fill="#1b8f4d"/><path d="M2.4 13.3 L4 14.9 L6.9 11.7" stroke="#fff" stroke-width="1.2" fill="none"/></svg>
<svg style="left:23.9px;top:332.2px" width="10.5" height="8.8" viewBox="0 0 21 17.6"><path d="M0 2.2 Q0 0.6 1.6 0.6 H7 L9 2.6 H19.4 Q21 2.6 21 4.2 V16 Q21 17.6 19.4 17.6 H1.6 Q0 17.6 0 16 Z" fill="#e9a52d"/><path d="M0 5.4 Q0 4.2 1.4 4.2 H19.6 Q21 4.2 21 5.6 V16 Q21 17.6 19.4 17.6 H1.6 Q0 17.6 0 16 Z" fill="#ffd767"/><path d="M0 14.8 H21 V16 Q21 17.6 19.4 17.6 H1.6 Q0 17.6 0 16 Z" fill="#f4c144"/><circle cx="4.6" cy="13.2" r="5.8" fill="#fff"/><circle cx="4.6" cy="13.2" r="4.5" fill="#e9f6ee" stroke="#4aa777" stroke-width="1.5"/><path d="M3 13.6 A1.7 1.7 0 0 1 6.2 12.6 M6.2 14 A1.7 1.7 0 0 1 3.2 14.4" stroke="#4aa777" stroke-width="0.9" fill="none"/></svg>
<svg style="left:23.9px;top:352.7px" width="10.5" height="8.8" viewBox="0 0 21 17.6"><path d="M0 2.2 Q0 0.6 1.6 0.6 H7 L9 2.6 H19.4 Q21 2.6 21 4.2 V16 Q21 17.6 19.4 17.6 H1.6 Q0 17.6 0 16 Z" fill="#e9a52d"/><path d="M0 5.4 Q0 4.2 1.4 4.2 H19.6 Q21 4.2 21 5.6 V16 Q21 17.6 19.4 17.6 H1.6 Q0 17.6 0 16 Z" fill="#ffd767"/><path d="M0 14.8 H21 V16 Q21 17.6 19.4 17.6 H1.6 Q0 17.6 0 16 Z" fill="#f4c144"/></svg>
<svg style="left:23.9px;top:373.7px" width="10.5" height="8.8" viewBox="0 0 21 17.6"><path d="M0 2.2 Q0 0.6 1.6 0.6 H7 L9 2.6 H19.4 Q21 2.6 21 4.2 V16 Q21 17.6 19.4 17.6 H1.6 Q0 17.6 0 16 Z" fill="#e9a52d"/><path d="M0 5.4 Q0 4.2 1.4 4.2 H19.6 Q21 4.2 21 5.6 V16 Q21 17.6 19.4 17.6 H1.6 Q0 17.6 0 16 Z" fill="#ffd767"/><path d="M0 14.8 H21 V16 Q21 17.6 19.4 17.6 H1.6 Q0 17.6 0 16 Z" fill="#f4c144"/><circle cx="4.6" cy="13.2" r="5.8" fill="#fff"/><circle cx="4.6" cy="13.2" r="5" fill="#1b8f4d"/><path d="M2.4 13.3 L4 14.9 L6.9 11.7" stroke="#fff" stroke-width="1.2" fill="none"/></svg>
<svg style="left:23.9px;top:394.2px" width="10.5" height="8.8" viewBox="0 0 21 17.6"><path d="M0 2.2 Q0 0.6 1.6 0.6 H7 L9 2.6 H19.4 Q21 2.6 21 4.2 V16 Q21 17.6 19.4 17.6 H1.6 Q0 17.6 0 16 Z" fill="#e9a52d"/><path d="M0 5.4 Q0 4.2 1.4 4.2 H19.6 Q21 4.2 21 5.6 V16 Q21 17.6 19.4 17.6 H1.6 Q0 17.6 0 16 Z" fill="#ffd767"/><path d="M0 14.8 H21 V16 Q21 17.6 19.4 17.6 H1.6 Q0 17.6 0 16 Z" fill="#f4c144"/><circle cx="4.6" cy="13.2" r="5.8" fill="#fff"/><circle cx="4.6" cy="13.2" r="4.5" fill="#e9f6ee" stroke="#4aa777" stroke-width="1.5"/><path d="M3 13.6 A1.7 1.7 0 0 1 6.2 12.6 M6.2 14 A1.7 1.7 0 0 1 3.2 14.4" stroke="#4aa777" stroke-width="0.9" fill="none"/></svg>
<svg style="left:97px;top:229.8px" width="7" height="7" viewBox="0 0 9 9.5"><path d="M5.2 0.6 L8.4 3.8 L7.4 4.4 L6 6.4 L5.6 8 L3.6 6.4 L1 9 L0.6 8.6 L3 5.8 L1.2 3.8 L3 3.4 L4.8 1.8 Z" fill="#7c8a9c"/></svg>
<svg style="left:97px;top:250.3px" width="7" height="7" viewBox="0 0 9 9.5"><path d="M5.2 0.6 L8.4 3.8 L7.4 4.4 L6 6.4 L5.6 8 L3.6 6.4 L1 9 L0.6 8.6 L3 5.8 L1.2 3.8 L3 3.4 L4.8 1.8 Z" fill="#7c8a9c"/></svg>
<svg style="left:97px;top:270.8px" width="7" height="7" viewBox="0 0 9 9.5"><path d="M5.2 0.6 L8.4 3.8 L7.4 4.4 L6 6.4 L5.6 8 L3.6 6.4 L1 9 L0.6 8.6 L3 5.8 L1.2 3.8 L3 3.4 L4.8 1.8 Z" fill="#7c8a9c"/></svg>
<svg style="left:97px;top:291.3px" width="7" height="7" viewBox="0 0 9 9.5"><path d="M5.2 0.6 L8.4 3.8 L7.4 4.4 L6 6.4 L5.6 8 L3.6 6.4 L1 9 L0.6 8.6 L3 5.8 L1.2 3.8 L3 3.4 L4.8 1.8 Z" fill="#7c8a9c"/></svg>
<svg style="left:97px;top:312.3px" width="7" height="7" viewBox="0 0 9 9.5"><path d="M5.2 0.6 L8.4 3.8 L7.4 4.4 L6 6.4 L5.6 8 L3.6 6.4 L1 9 L0.6 8.6 L3 5.8 L1.2 3.8 L3 3.4 L4.8 1.8 Z" fill="#7c8a9c"/></svg>
<span class="t" style="left:37.50px;top:230.00px;font-size:8.2px;color:#1a1a1a;-webkit-text-stroke:0.2px #1a1a1a;transform:scaleX(0.8897);">May 2022</span>
<span class="t" style="left:37.50px;top:250.50px;font-size:8.2px;color:#1a1a1a;-webkit-text-stroke:0.2px #1a1a1a;transform:scaleX(0.9072);">Camtasia Studio</span>
<span class="t" style="left:37.50px;top:271.00px;font-size:8.2px;color:#1a1a1a;-webkit-text-stroke:0.2px #1a1a1a;transform:scaleX(0.9415);">Documents</span>
<span class="t" style="left:37.50px;top:291.50px;font-size:8.2px;color:#1a1a1a;-webkit-text-stroke:0.2px #1a1a1a;transform:scaleX(0.9297);">Pictures</span>
<span class="t" style="left:37.50px;top:312.50px;font-size:8.2px;color:#1a1a1a;-webkit-text-stroke:0.2px #1a1a1a;transform:scaleX(0.8957);">May 2022 Event</span>
<span class="t" style="left:37.50px;top:333.50px;font-size:8.2px;color:#1a1a1a;-webkit-text-stroke:0.2px #1a1a1a;transform:scaleX(0.8852);">Courses</span>
<span class="t" style="left:37.50px;top:354.00px;font-size:8.2px;color:#1a1a1a;-webkit-text-stroke:0.2px #1a1a1a;transform:scaleX(0.9250);">File Explorer Shortcuts</span>
<span class="t" style="left:37.50px;top:375.00px;font-size:8.2px;color:#1a1a1a;-webkit-text-stroke:0.2px #1a1a1a;transform:scaleX(0.9250);">Microsoft Creators W</span>
<span class="t" style="left:37.50px;top:395.50px;font-size:8.2px;color:#1a1a1a;-webkit-text-stroke:0.2px #1a1a1a;transform:scaleX(0.8915);">Versions</span>
<span class="t" style="left:32.20px;top:105.00px;font-size:8.2px;color:#1a1a1a;-webkit-text-stroke:0.2px #1a1a1a;transform:scaleX(0.9255);">Q</span>
<div class="a" style="left:106.8px;top:90px;width:10.5px;height:322px;background:#fff"></div>
<div class="a" style="left:106.8px;top:92px;width:8.4px;height:320px;background:#f2f2f2"></div>
<div class="a" style="left:110.5px;top:96px;width:1.4px;height:233px;background:#5e5e5e"></div>
<!-- menu -->
<div class="a" style="left:282px;top:55px;width:120.5px;height:213px;background:#f9f9f9;border-radius:5px;box-shadow:0 4px 10px rgba(0,0,0,.2),0 0 2.5px rgba(0,0,0,.16)"></div>
<div class="a" style="left:286.5px;top:58.6px;width:113.5px;height:16.8px;background:#efefef;border-radius:3px"></div>
<div class="a" style="left:282.5px;top:223px;width:120px;height:1px;background:#e6e6e6"></div>
<div class="a" style="left:282.5px;top:245.6px;width:120px;height:1px;background:#e6e6e6"></div>
<svg style="left:310px;top:62px" width="11" height="11" viewBox="0 0 11 11"><rect x="0.6" y="0.8" width="8.8" height="6.9" rx="1.7" fill="none" stroke="#5e5e5e" stroke-width="0.95"/><path d="M2.4 8.5 H7.6" stroke="#5e5e5e" stroke-width="1.2" stroke-linecap="round"/></svg>
<svg style="left:310px;top:83px" width="11" height="11" viewBox="0 0 11 11"><rect x="1.2" y="1.4" width="7.8" height="6" rx="1.5" fill="none" stroke="#5e5e5e" stroke-width="0.95"/><path d="M2.6 8.6 H7.6" stroke="#5e5e5e" stroke-width="1.2" stroke-linecap="round"/></svg>
<svg style="left:310px;top:103.5px" width="11" height="11" viewBox="0 0 11 11"><rect x="2.2" y="1" width="6.2" height="5.4" rx="1.6" fill="none" stroke="#5e5e5e" stroke-width="0.95"/><path d="M3.4 8 H7.2 M3 9.8 H7.6" stroke="#5e5e5e" stroke-width="0.9" stroke-linecap="round"/></svg>
<svg style="left:310px;top:124px" width="11" height="11" viewBox="0 0 11 11"><g fill="none" stroke="#5e5e5e" stroke-width="0.9"><rect x="1" y="0.8" width="3.6" height="3.6" rx="1.5"/><rect x="6" y="0.8" width="3.6" height="3.6" rx="1.5"/><rect x="1" y="6" width="3.6" height="3.6" rx="1.5"/><rect x="6" y="6" width="3.6" height="3.6" rx="1.5"/></g></svg>
<svg style="left:310px;top:145.5px" width="11" height="9" viewBox="0 0 11 9"><g fill="#a2a2a2"><rect x="0.2" y="0.4" width="4.2" height="2"/><rect x="5.6" y="0.4" width="4.2" height="2"/><rect x="0.2" y="3.5" width="4.2" height="2"/><rect x="5.6" y="3.5" width="4.2" height="2"/><rect x="0.2" y="6.6" width="4.2" height="2"/><rect x="5.6" y="6.6" width="4.2" height="2"/></g></svg>
<svg style="left:310px;top:166.5px" width="11" height="9" viewBox="0 0 11 9"><g fill="#a2a2a2"><rect x="0.2" y="0.2" width="10" height="1.8"/><rect x="0.2" y="2.5" width="10" height="1.8"/><rect x="0.2" y="4.8" width="10" height="1.8"/><rect x="0.2" y="7.1" width="10" height="1.8"/></g></svg>
<svg style="left:310px;top:186.5px" width="11" height="10" viewBox="0 0 11 10"><g fill="none" stroke="#5e5e5e" stroke-width="0.85"><circle cx="1.8" cy="2.6" r="1.5"/><circle cx="1.8" cy="7" r="1.5"/><path d="M5 2.6 H10 M5 7 H10"/></g></svg>
<svg style="left:310px;top:207px" width="11" height="10" viewBox="0 0 11 10"><g fill="none" stroke="#5e5e5e" stroke-width="0.85"><circle cx="1.8" cy="1.6" r="1.1"/><circle cx="1.8" cy="4.8" r="1.1"/><circle cx="1.8" cy="8" r="1.1"/><path d="M4.6 1.6 H9.6 M4.6 4.8 H9.6 M4.6 8 H9.6"/></g></svg>
<svg style="left:310px;top:230px" width="11" height="10" viewBox="0 0 11 10"><path d="M2.4 0.4 V3.4 M1.2 2.2 L2.4 3.5 L3.6 2.2 M2.4 9.6 V6.6 M1.2 7.8 L2.4 6.5 L3.6 7.8 M0.6 5 H4.2" stroke="#2f7fd6" stroke-width="0.85" fill="none"/><path d="M5.6 2.4 H9.8 M5.6 5 H9.8 M5.6 7.6 H9.8" stroke="#8a8a8a" stroke-width="1"/></svg>
<svg style="left:387.2px;top:254.10000000000002px" width="4.2" height="6.4" viewBox="0 0 4.2 6.4"><path d="M1 1 L3.2 3.2 L1 5.4" stroke="#777" stroke-width="0.8" fill="none" stroke-linecap="round" stroke-linejoin="round"/></svg>
<svg style="left:350.8px;top:73.6px" width="9" height="14.5" viewBox="0 0 9 14.5"><path d="M0.6 0.6 V11 L3 8.8 L4.9 13.2 L6.5 12.5 L4.7 8.2 H8 Z" fill="#fff" stroke="#222" stroke-width="0.8" stroke-linejoin="round"/></svg>
<span class="t" style="left:327.50px;top:62.15px;font-size:9.7px;color:#1a1a1a;-webkit-text-stroke:0.1px #1a1a1a;transform:scaleX(0.9008);">Extra large icons</span>
<span class="t" style="left:327.50px;top:83.65px;font-size:9.7px;color:#1a1a1a;-webkit-text-stroke:0.1px #1a1a1a;transform:scaleX(0.8983);">Large icons</span>
<span class="t" style="left:327.50px;top:104.15px;font-size:9.7px;color:#1a1a1a;-webkit-text-stroke:0.1px #1a1a1a;transform:scaleX(0.9454);">Medium icons</span>
<span class="t" style="left:327.50px;top:124.85px;font-size:9.7px;color:#1a1a1a;-webkit-text-stroke:0.1px #1a1a1a;transform:scaleX(0.8984);">Small icons</span>
<span class="t" style="left:327.50px;top:145.65px;font-size:9.7px;color:#1a1a1a;-webkit-text-stroke:0.1px #1a1a1a;transform:scaleX(0.8622);">List</span>
<span class="t" style="left:327.50px;top:166.45px;font-size:9.7px;color:#1a1a1a;-webkit-text-stroke:0.1px #1a1a1a;transform:scaleX(0.9114);">Details</span>
<span class="t" style="left:327.50px;top:186.95px;font-size:9.7px;color:#1a1a1a;-webkit-text-stroke:0.1px #1a1a1a;transform:scaleX(0.8709);">Tiles</span>
<span class="t" style="left:327.50px;top:207.65px;font-size:9.7px;color:#1a1a1a;-webkit-text-stroke:0.1px #1a1a1a;transform:scaleX(0.9429);">Content</span>
<span class="t" style="left:327.50px;top:230.05px;font-size:9.7px;color:#1a1a1a;-webkit-text-stroke:0.1px #1a1a1a;transform:scaleX(0.9286);">Compact view</span>
<span class="t" style="left:327.50px;top:252.15px;font-size:9.7px;color:#1a1a1a;-webkit-text-stroke:0.1px #1a1a1a;transform:scaleX(0.9078);">Show</span>
<!-- callout -->

<svg width="638" height="428" style="left:0;top:0;filter:drop-shadow(1.6px 1.8px 1.6px rgba(0,0,0,.55))"><path d="M36 86 H215.7 V108 L278.5 134.4 L215.7 142.4 V220.3 H36 Z" fill="#5b9bd5" stroke="#41719c" stroke-width="1"/></svg>

<span class="t" style="left:47.00px;top:96.30px;font-size:17.6px;color:#fff;-webkit-text-stroke:0.3px #fff;transform:scaleX(0.8103);">Each</span>
<span class="t" style="left:86.60px;top:96.30px;font-size:17.6px;color:#fff;-webkit-text-stroke:0.3px #fff;transform:scaleX(1.0553);">of</span>
<span class="t" style="left:109.10px;top:96.30px;font-size:17.6px;color:#fff;-webkit-text-stroke:0.3px #fff;transform:scaleX(0.9236);">the</span>
<span class="t" style="left:141.00px;top:96.30px;font-size:17.6px;color:#fff;-webkit-text-stroke:0.3px #fff;transform:scaleX(1.0326);">eight</span>
<span class="t" style="left:47.00px;top:120.30px;font-size:17.6px;color:#fff;-webkit-text-stroke:0.3px #fff;transform:scaleX(0.9000);">views</span>
<span class="t" style="left:95.90px;top:120.30px;font-size:17.6px;color:#fff;-webkit-text-stroke:0.3px #fff;transform:scaleX(0.7006);">in</span>
<span class="t" style="left:112.80px;top:120.30px;font-size:17.6px;color:#fff;-webkit-text-stroke:0.3px #fff;transform:scaleX(0.8762);">this</span>
<span class="t" style="left:143.80px;top:120.30px;font-size:17.6px;color:#fff;-webkit-text-stroke:0.3px #fff;transform:scaleX(0.9481);">list</span>
<span class="t" style="left:171.80px;top:120.30px;font-size:17.6px;color:#fff;-webkit-text-stroke:0.3px #fff;transform:scaleX(1.1278);">has</span>
<span class="t" style="left:46.30px;top:144.30px;font-size:17.6px;color:#fff;-webkit-text-stroke:0.3px #fff;transform:scaleX(0.8778);">a</span>
<span class="t" style="left:61.20px;top:144.30px;font-size:17.6px;color:#fff;-webkit-text-stroke:0.3px #fff;transform:scaleX(1.0296);">corresponding</span>
<span class="t" style="left:47.00px;top:168.30px;font-size:17.6px;color:#fff;font-weight:bold;-webkit-text-stroke:0.4px #fff;transform:scaleX(0.9039);">Ctrl</span>
<span class="t" style="left:79.60px;top:168.30px;font-size:17.6px;color:#fff;font-weight:bold;-webkit-text-stroke:0.4px #fff;transform:scaleX(1.1574);">+</span>
<span class="t" style="left:95.00px;top:168.30px;font-size:17.6px;color:#fff;font-weight:bold;-webkit-text-stroke:0.4px #fff;transform:scaleX(0.9388);">Shift</span>
<span class="t" style="left:136.60px;top:168.30px;font-size:17.6px;color:#fff;font-weight:bold;-webkit-text-stroke:0.4px #fff;transform:scaleX(1.1574);">+</span>
<span class="t" style="left:151.50px;top:168.30px;font-size:17.6px;color:#fff;font-weight:bold;-webkit-text-stroke:0.4px #fff;transform:scaleX(1.0003);">#</span>
<span class="t" style="left:47.00px;top:192.30px;font-size:17.6px;color:#fff;-webkit-text-stroke:0.3px #fff;transform:scaleX(1.0328);">shortcut.</span>
<!-- annot -->

<svg width="638" height="428" style="left:0;top:0">
<g style="filter:drop-shadow(1.2px 2.2px 2.2px rgba(0,0,0,.45))">
<path d="M296.4 84.2 V191" stroke="#ed7d31" stroke-width="3.3" fill="none"/>
<path d="M287.5 177.2 L296.3 191.8 L305.1 177.2" stroke="#ed7d31" stroke-width="3" fill="none" stroke-linecap="butt" stroke-linejoin="miter"/>
<circle cx="296.1" cy="69.2" r="8.5" fill="#ed7d31"/>
<circle cx="297.3" cy="210.4" r="8.8" fill="#ed7d31"/>
</g></svg>

<span class="t" style="left:293.60px;top:62.90px;font-size:12px;color:#fff;font-weight:bold;transform:scaleX(0.6430);">1</span>
<span class="t" style="left:293.60px;top:206.25px;font-size:11.5px;color:#fff;font-weight:bold;transform:scaleX(0.8898);">8</span>
</div></body></html>
